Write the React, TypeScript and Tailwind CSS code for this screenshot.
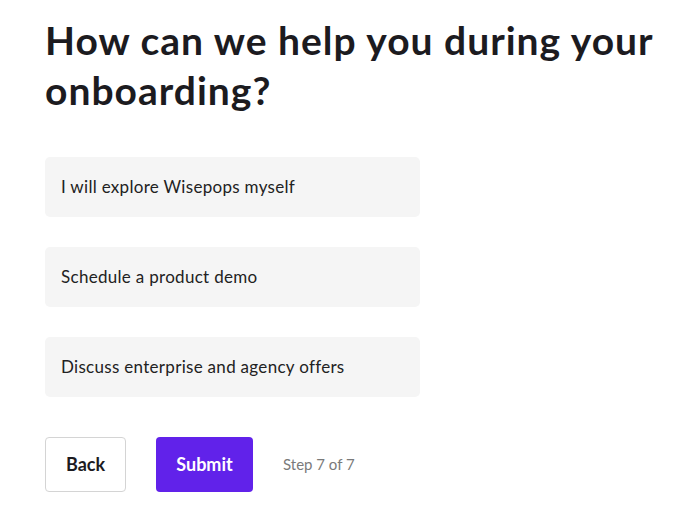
const options = [
  "I will explore Wisepops myself",
  "Schedule a product demo",
  "Discuss enterprise and agency offers",
];

export default function App() {
  return (
    <div className="min-h-screen bg-white pl-[45px] pr-[10px] pt-[15px] font-['Lato',sans-serif] text-[#1c1b1f]">
      <h1 className="text-[39px] font-bold leading-[50px] tracking-[1px]">
        How can we help you during your onboarding?
      </h1>
      <div className="mt-[42px] flex w-[375px] flex-col gap-[30px]">
        {options.map((o) => (
          <button
            key={o}
            type="button"
            className="flex h-[60px] items-center rounded-[5px] bg-[#f5f5f5] px-4 text-left text-[17px] tracking-[0.3px] text-[#222]"
          >
            {o}
          </button>
        ))}
      </div>
      <div className="mt-[40px] flex items-center gap-[30px]">
        <button
          type="button"
          className="h-[55px] w-[81px] rounded-[4px] border border-[#d4d4d4] bg-white text-[18px] font-bold"
        >
          Back
        </button>
        <button
          type="button"
          className="h-[55px] w-[97px] rounded-[4px] bg-[#6122ea] text-[18px] font-bold text-white"
        >
          Submit
        </button>
        <span className="text-[15px] text-[#7a7a7a]">Step 7 of 7</span>
      </div>
    </div>
  );
}
